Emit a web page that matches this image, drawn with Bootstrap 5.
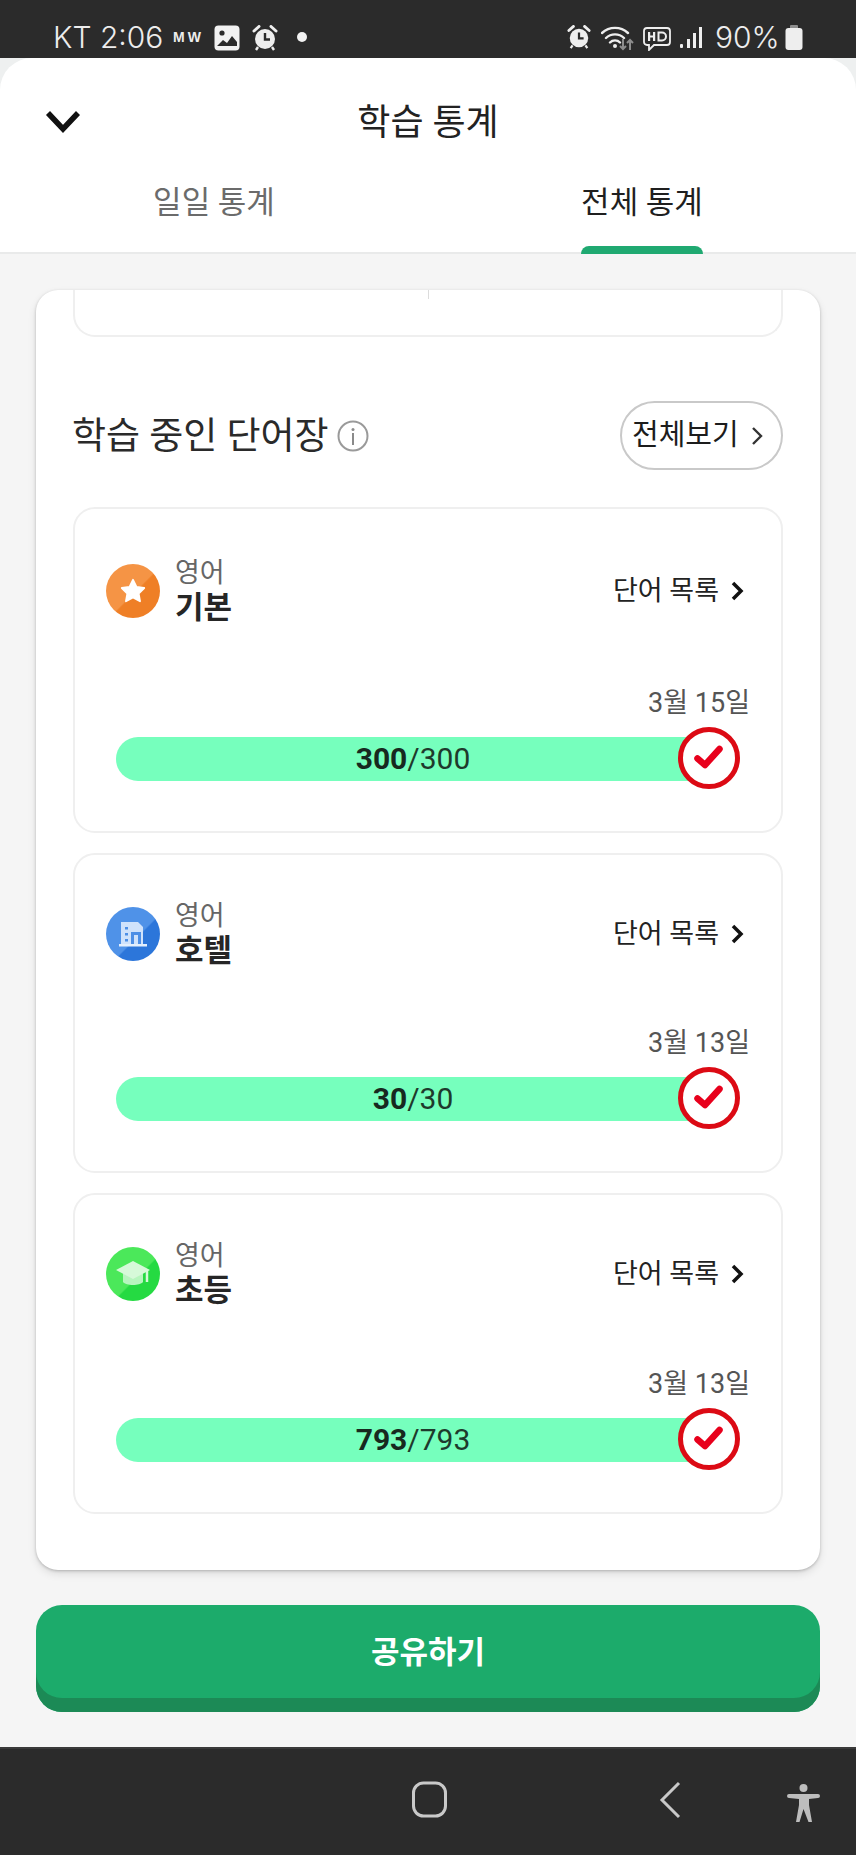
<!DOCTYPE html>
<html lang="ko">
<head>
<meta charset="utf-8">
<title>학습 통계</title>
<link href="https://cdn.jsdelivr.net/npm/bootstrap@5.3.0/dist/css/bootstrap.min.css" rel="stylesheet">
<style>
html,body{height:100%}
body{background:#f5f5f5;font-family:Roboto,"Noto Sans CJK KR",sans-serif;color:#222;overflow:hidden}
.app{width:856px;height:1855px}
.sysbar{background:#2b2b2b;color:#ededed}
.topbar{height:58px;padding:25px 53px 0 53px;font-family:Inter,Roboto,sans-serif;font-size:30px;line-height:25px;font-weight:300}
.topbar svg{display:block}
.clocktxt{width:110px;white-space:nowrap}
.mwtxt{font-family:"Liberation Sans",sans-serif;font-size:14px;font-weight:700;letter-spacing:3px;width:32px;margin-left:10px;margin-right:9px;white-space:nowrap}
.pct{width:64px;margin-left:12px;margin-right:6px;white-space:nowrap;font-size:30px}
.sheetwrap{background:#eef0f0}
.sheet{background:#fff;border-radius:32px 32px 0 0;height:196px;border-bottom:2px solid #e9eaea}
.titlerow{height:126px;padding:0 45px}
.pagetitle{font-size:36px;font-weight:400;color:#222;margin:3px 0 0;line-height:1}
.titleside{width:36px}
.tabsrow{height:68px}
.tabcell{height:68px;padding-top:1px;font-size:31px;font-weight:400;line-height:36px;color:#6b6b6b;position:relative}
.tabcell.on{color:#1f1f1f}
.tabmark{position:absolute;left:50%;transform:translateX(-50%);bottom:-2px;width:122px;height:8px;background:#1fa971;border-radius:8px 8px 0 0}
.mainarea{padding:36px 36px 0}
.bigcard{height:1280px;border:0;border-radius:22px;box-shadow:0 1px 3px rgba(0,0,0,.22),0 4px 8px rgba(0,0,0,.1);padding:0 37px;overflow:hidden}
.cutbox{height:47px;border:2px solid #efefef;border-top:0;border-radius:0 0 22px 22px}
.cuttick{width:1px;height:9px;background:#dcdcdc}
.headrow{height:170px;padding:64px 0 37px}
.headtitle{font-size:37px;font-weight:400;color:#2a2a2a;line-height:1;margin:2px 0 0 -1px}
.allbtn{width:163px;height:69px;border:2px solid #c9c9c9;border-radius:35px;background:#fff;font-size:29px;font-weight:400;color:#1c1c1c;padding:0 0 0 10px;white-space:nowrap}
.wordcard{border:2px solid #efefef;border-radius:22px;height:320px;margin-bottom:20px;padding:0 36px 0 31px;background:#fff}
.wordcard.first{height:326px}
.wordcard.first .cardtop{height:175px;padding-top:47px}
.wordcard.third{height:321px}
.wordcard.third .cardtop{height:170px}
.cardtop{height:169px;padding-top:44px}
.roundico{width:54px;height:54px;border-radius:50%;flex:none}
.ico-o{background:linear-gradient(135deg,#f59445 52%,#ef7f26 54%)}
.ico-b{background:linear-gradient(135deg,#4f92e8 56%,#2c76da 58%)}
.ico-g{background:linear-gradient(135deg,#4be85a 56%,#25da42 58%)}
.wordtext{margin-left:15px}
.langtxt{font-size:27px;line-height:34px;color:#666;font-weight:400}
.nametxt{font-size:31px;line-height:36px;font-weight:700;color:#262626}
.listlnk{font-size:27px;font-weight:400;color:#222;line-height:34px;margin-right:1px}
.datetxt{font-size:27px;line-height:34px;color:#555;text-align:right;margin-right:-5px;height:53px;padding-top:2px}
.barwrap{position:relative;margin-left:10px;width:594px}
.greenbar{height:44px;border-radius:22px 0 0 22px;background:#76ffbd;font-size:30px;line-height:44px;color:#1e3a2c;overflow:visible}
.greenbar b{font-weight:700;color:#17291f}
.checkmark{position:absolute;right:-30px;top:-10px;width:62px;height:62px;display:block}
.sharebtn{margin:35px 36px 0;width:784px;height:107px;border-radius:26px;border:0;background:#1cab6b;box-shadow:inset 0 -14px 0 #1c8a56;color:#fff;font-size:31px;font-weight:700;padding:0 0 11px}
.sharebtn:hover,.sharebtn:active{background:#1cab6b!important;color:#fff!important}
.navstrip{position:relative;height:108px;margin-top:35px;border-top:2px solid #3a3a3a}
.navstrip svg{position:absolute}
.nav-home{left:411px;top:32px}
.nav-back{left:658px;top:32px}
.nav-acc{left:787px;top:34px}
</style>
</head>
<body>
<div class="app d-flex flex-column">
  <div class="sysbar topbar d-flex align-items-start">
    <span class="clocktxt">KT 2:06</span>
    <span class="mwtxt">MW</span>
    <svg width="26" height="26" viewBox="0 0 26 26"><rect x="0.5" y="0.5" width="25" height="25" rx="4" fill="#f2f2f2"/><circle cx="8" cy="8" r="2.6" fill="#2b2b2b"/><path d="M3 21l6-6 4 3 5-7 5 6v4H3z" fill="#2b2b2b"/></svg>
    <svg style="margin-left:12px" width="26" height="26" viewBox="0 0 26 26"><circle cx="13" cy="14" r="10" fill="#eee"/><path d="M13 8v6.5h5" fill="none" stroke="#2b2b2b" stroke-width="2.4"/><path d="M2 6l5-4.5M24 6l-5-4.5" stroke="#eee" stroke-width="3" stroke-linecap="round"/><path d="M6 22l-2 3M20 22l2 3" stroke="#eee" stroke-width="2.4"/></svg>
    <svg style="margin-left:19px;margin-top:7px" width="10" height="10" viewBox="0 0 10 10"><circle cx="5" cy="5" r="5" fill="#f2f2f2"/></svg>
    <span class="flex-grow-1"></span>
    <svg width="24" height="24" viewBox="0 0 26 26"><circle cx="13" cy="14" r="10" fill="#eee"/><path d="M13 8v6.5h5" fill="none" stroke="#2b2b2b" stroke-width="2.4"/><path d="M2 6l5-4.5M24 6l-5-4.5" stroke="#eee" stroke-width="3" stroke-linecap="round"/><path d="M6 22l-2 3M20 22l2 3" stroke="#eee" stroke-width="2.4"/></svg>
    <svg style="margin-left:10px;margin-top:-1px" width="33" height="27" viewBox="0 0 33 27"><path d="M1 9a19 19 0 0 1 26 0M5 14a13 13 0 0 1 18 0M9 18.500a7 7 0 0 1 10 0" fill="none" stroke="#eee" stroke-width="2.4" stroke-linecap="round"/><circle cx="14" cy="22" r="2" fill="#eee"/><path d="M22 15v10m-3-3l3 3 3-3" fill="none" stroke="#8d8d8d" stroke-width="2"/><path d="M29 26V16m-3 3l3-3 3 3" fill="none" stroke="#8d8d8d" stroke-width="2"/></svg>
    <svg style="margin-left:9px;margin-top:2px" width="28" height="24" viewBox="0 0 28 24"><path d="M4 1h20a3 3 0 0 1 3 3v11a3 3 0 0 1-3 3H11l-5 5v-5H4a3 3 0 0 1-3-3V4a3 3 0 0 1 3-3z" fill="none" stroke="#eee" stroke-width="1.800"/><rect x="5" y="5" width="2.200" height="9" fill="#eee"/><rect x="10" y="5" width="2.200" height="9" fill="#eee"/><rect x="6" y="8.500" width="5" height="2" fill="#eee"/><path d="M15.500 5.500h3.500a3.500 3.500 0 0 1 0 8h-3.500z" fill="none" stroke="#eee" stroke-width="2"/></svg>
    <svg style="margin-left:8px;margin-top:1px" width="24" height="23" viewBox="0 0 24 23"><g fill="#eee"><rect x="1" y="18" width="3" height="4" rx="1"/><rect x="8" y="13" width="3" height="9"/><rect x="14" y="7" width="3" height="15"/><rect x="20" y="1" width="3" height="21"/></g></svg>
    <span class="pct">90%</span>
    <svg width="18" height="25" viewBox="0 0 18 25"><rect x="5" y="0" width="8" height="4" rx="1" fill="#8f8f8f"/><rect x="0.500" y="3" width="17" height="22" rx="3" fill="#eee"/></svg>
  </div>

  <div class="sheetwrap">
    <div class="sheet">
      <div class="titlerow d-flex align-items-center justify-content-between">
        <div class="titleside"><svg class="d-block" width="36" height="23" viewBox="0 0 36 23"><path d="M3 3l15 16L33 3" fill="none" stroke="#111" stroke-width="5.500"/></svg></div>
        <h1 class="pagetitle">학습 통계</h1>
        <div class="titleside"></div>
      </div>
      <div class="tabsrow row g-0">
        <div class="col-6 tabcell text-center">일일 통계</div>
        <div class="col-6 tabcell on text-center">전체 통계<span class="tabmark"></span></div>
      </div>
    </div>
  </div>

  <div class="mainarea">
    <div class="card bigcard">
      <div class="cutbox d-flex justify-content-center"><span class="cuttick"></span></div>
      <div class="headrow d-flex align-items-center justify-content-between">
        <div class="d-flex align-items-center">
          <h2 class="headtitle">학습 중인 단어장</h2>
          <svg class="ms-2" width="32" height="32" viewBox="0 0 32 32"><circle cx="16" cy="16" r="14.500" fill="none" stroke="#9a9a9a" stroke-width="2"/><circle cx="16" cy="9.500" r="1.500" fill="#8a8a8a"/><rect x="15" y="13" width="2" height="12" fill="#8a8a8a"/></svg>
        </div>
        <button class="allbtn btn d-flex align-items-center" type="button">전체보기<svg style="margin-left:11px" width="14" height="20" viewBox="0 0 14 20"><path d="M3 2l8 8-8 8" fill="none" stroke="#333" stroke-width="2.400"/></svg></button>
      </div>

      <div class="wordcard first card">
        <div class="cardtop">
          <div class="d-flex align-items-center justify-content-between">
            <div class="d-flex align-items-center">
              <div class="roundico ico-o d-flex align-items-center justify-content-center"><svg width="28" height="28" viewBox="0 0 30 30"><path d="M15 3l3.700 7.700 8.300 1.100-6 5.900 1.500 8.300-7.500-4.100-7.500 4.100 1.500-8.300-6-5.900 8.300-1.100z" fill="#fff" stroke="#fff" stroke-width="2" stroke-linejoin="round"/></svg></div>
              <div class="wordtext"><div class="langtxt">영어</div><div class="nametxt">기본</div></div>
            </div>
            <div class="listlnk d-flex align-items-center">단어 목록<svg style="margin-left:11px" width="14" height="22" viewBox="0 0 14 22"><path d="M3 3l8 8-8 8" fill="none" stroke="#111" stroke-width="3.500"/></svg></div>
          </div>
        </div>
        <div class="datetxt">3월 15일</div>
        <div class="barwrap">
          <div class="progress greenbar text-center d-block"><span><b>300</b>/300</span></div>
          <svg class="checkmark" viewBox="0 0 62 62"><circle cx="31" cy="31" r="28.500" fill="#fff" stroke="#dc0a14" stroke-width="5"/><path d="M19.500 31.500l7.500 6.500 14.500-16" fill="none" stroke="#e8001c" stroke-width="6.500" stroke-linecap="round" stroke-linejoin="round"/></svg>
        </div>
      </div>

      <div class="wordcard card">
        <div class="cardtop">
          <div class="d-flex align-items-center justify-content-between">
            <div class="d-flex align-items-center">
              <div class="roundico ico-b d-flex align-items-center justify-content-center"><svg width="30" height="30" viewBox="0 0 30 30"><path d="M3 3h17l5 5v19H3z" fill="#cfe2fb"/><rect x="1" y="25" width="28" height="2.500" fill="#e3effd"/><g fill="#4d8fe6"><rect x="7" y="8" width="3" height="2.500"/><rect x="7" y="14" width="3" height="2.500"/><rect x="7" y="20" width="3" height="2.500"/><path d="M13 25V13h10v12h-3V16h-4v9z"/></g></svg></div>
              <div class="wordtext"><div class="langtxt">영어</div><div class="nametxt">호텔</div></div>
            </div>
            <div class="listlnk d-flex align-items-center">단어 목록<svg style="margin-left:11px" width="14" height="22" viewBox="0 0 14 22"><path d="M3 3l8 8-8 8" fill="none" stroke="#111" stroke-width="3.500"/></svg></div>
          </div>
        </div>
        <div class="datetxt">3월 13일</div>
        <div class="barwrap">
          <div class="progress greenbar text-center d-block"><span><b>30</b>/30</span></div>
          <svg class="checkmark" viewBox="0 0 62 62"><circle cx="31" cy="31" r="28.500" fill="#fff" stroke="#dc0a14" stroke-width="5"/><path d="M19.500 31.500l7.500 6.500 14.500-16" fill="none" stroke="#e8001c" stroke-width="6.500" stroke-linecap="round" stroke-linejoin="round"/></svg>
        </div>
      </div>

      <div class="wordcard third card">
        <div class="cardtop">
          <div class="d-flex align-items-center justify-content-between">
            <div class="d-flex align-items-center">
              <div class="roundico ico-g d-flex align-items-center justify-content-center"><svg width="36" height="32" viewBox="0 0 36 32"><path d="M8 15v9c3 4 17 4 20 0v-9l-10 5z" fill="#b7f5be"/><path d="M18 3L1 12l17 9 17-9z" fill="#d6f9d9"/><path d="M32 13v11" stroke="#d6f9d9" stroke-width="2.500"/></svg></div>
              <div class="wordtext"><div class="langtxt">영어</div><div class="nametxt">초등</div></div>
            </div>
            <div class="listlnk d-flex align-items-center">단어 목록<svg style="margin-left:11px" width="14" height="22" viewBox="0 0 14 22"><path d="M3 3l8 8-8 8" fill="none" stroke="#111" stroke-width="3.500"/></svg></div>
          </div>
        </div>
        <div class="datetxt">3월 13일</div>
        <div class="barwrap">
          <div class="progress greenbar text-center d-block"><span><b>793</b>/793</span></div>
          <svg class="checkmark" viewBox="0 0 62 62"><circle cx="31" cy="31" r="28.500" fill="#fff" stroke="#dc0a14" stroke-width="5"/><path d="M19.500 31.500l7.500 6.500 14.500-16" fill="none" stroke="#e8001c" stroke-width="6.500" stroke-linecap="round" stroke-linejoin="round"/></svg>
        </div>
      </div>
    </div>
  </div>

  <button class="btn sharebtn" type="button">공유하기</button>

  <div class="sysbar navstrip">
    <svg class="nav-home" width="38" height="37" viewBox="0 0 38 37"><rect x="2.500" y="2" width="32" height="33" rx="10" fill="none" stroke="#c9c9c9" stroke-width="3"/></svg>
    <svg class="nav-back" width="24" height="38" viewBox="0 0 24 38"><path d="M21 2L4 19l17 17" fill="none" stroke="#c9c9c9" stroke-width="3"/></svg>
    <svg class="nav-acc" width="33" height="40" viewBox="0 0 33 40"><circle cx="16.500" cy="5" r="4" fill="#bdbdbd"/><path d="M2 11h29a2 2 0 0 1 0 4l-9 1v6l3 17h-3.500L16.500 26 12.500 39H9l3-17v-6l-10-1a2 2 0 0 1 0-4z" fill="#bdbdbd"/></svg>
  </div>
</div>
<script src="https://cdn.jsdelivr.net/npm/bootstrap@5.3.0/dist/js/bootstrap.bundle.min.js"></script>
</body>
</html>
